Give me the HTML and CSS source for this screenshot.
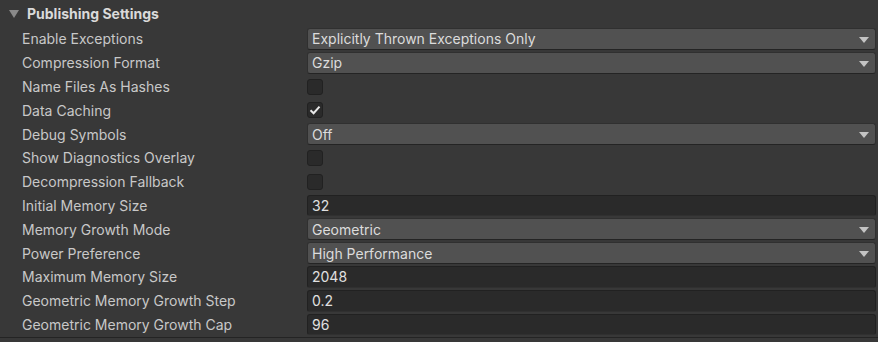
FILE: index.html
```html
<!DOCTYPE html>
<html>
<head>
<meta charset="utf-8">
<link rel="stylesheet" href="styles.css">
<title>Publishing Settings</title>
</head>
<body>
<div class="section">
  <div class="header"><span class="fold"></span>Publishing Settings</div>
  <div class="props">
    <div class="label">Enable Exceptions</div>
    <div class="popup">Explicitly Thrown Exceptions Only</div>

    <div class="label">Compression Format</div>
    <div class="popup">Gzip</div>

    <div class="label">Name Files As Hashes</div>
    <div><span class="toggle"></span></div>

    <div class="label">Data Caching</div>
    <div><span class="toggle on"><svg width="12" height="10" viewBox="0 0 12 10"><path d="M1.5 5.2 L4.6 8.2 L10.5 1.6" fill="none" stroke="#e8e8e8" stroke-width="2"/></svg></span></div>

    <div class="label">Debug Symbols</div>
    <div class="popup">Off</div>

    <div class="label">Show Diagnostics Overlay</div>
    <div><span class="toggle"></span></div>

    <div class="label">Decompression Fallback</div>
    <div><span class="toggle"></span></div>

    <div class="label">Initial Memory Size</div>
    <div class="field">32</div>

    <div class="label">Memory Growth Mode</div>
    <div class="popup">Geometric</div>

    <div class="label">Power Preference</div>
    <div class="popup">High Performance</div>

    <div class="label">Maximum Memory Size</div>
    <div class="field">2048</div>

    <div class="label">Geometric Memory Growth Step</div>
    <div class="field">0.2</div>

    <div class="label">Geometric Memory Growth Cap</div>
    <div class="field">96</div>
  </div>
</div>
</body>
</html>
```

FILE: styles.css
```css
body {
    margin: 0;
    background-color: #383838;
    color: #c8c8c8;
    font-family: Inter, "Noto Sans", sans-serif;
    font-size: 14px;
}
.section {
    height: 337px;
    border-bottom: 1px solid #242424;
    box-shadow: 0 1px 0 #454545;
}
.header {
    height: 26px;
    display: flex;
    align-items: center;
    padding-left: 9px;
    font-weight: bold;
    color: #dadada;
    font-size: 14px;
}
.fold {
    width: 0;
    height: 0;
    border-left: 5px solid transparent;
    border-right: 5px solid transparent;
    border-top: 8px solid #8a8a8a;
    margin-right: 8px;
    margin-top: 1px;
}
.props {
    display: grid;
    grid-template-columns: 285px 1fr;
    grid-auto-rows: 21.8px;
    row-gap: 2px;
    padding: 2px 2px 0 22px;
}
.label {
    display: flex;
    align-items: center;
    white-space: nowrap;
}
.popup, .field {
    display: flex;
    align-items: center;
    padding-left: 4px;
    border-radius: 3px;
    color: #dcdcdc;
    box-sizing: border-box;
}
.popup {
    background-color: #515151;
    border: 1px solid #303030;
    border-bottom-color: #242424;
    position: relative;
}
.popup::after {
    content: "";
    position: absolute;
    right: 6px;
    top: 8px;
    border-left: 5px solid transparent;
    border-right: 5px solid transparent;
    border-top: 6px solid #c4c4c4;
}
.field {
    background-color: #2a2a2a;
    border: 1px solid #212121;
    border-bottom-color: #303030;
    color: #e0e0e0;
}
.toggle {
    display: flex;
    align-items: center;
    justify-content: center;
    width: 16px;
    height: 16px;
    margin-top: 3px;
    box-sizing: border-box;
    background-color: #2a2a2a;
    border: 1px solid #212121;
    border-radius: 3px;
}
```
